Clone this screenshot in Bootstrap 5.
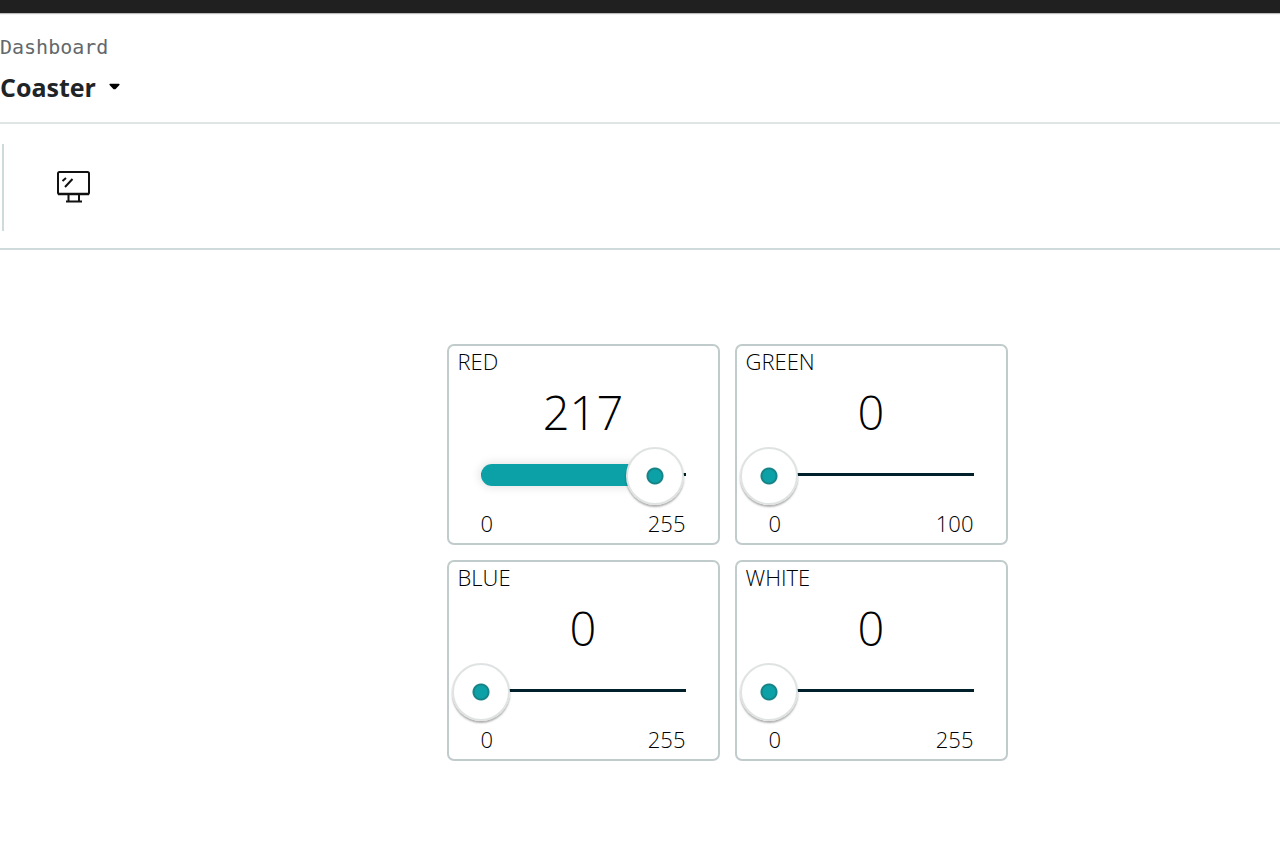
<!DOCTYPE html>
<html lang="en">
<head>
<meta charset="utf-8">
<meta name="viewport" content="width=device-width, initial-scale=1">
<title>Coaster</title>
<link href="https://cdn.jsdelivr.net/npm/bootstrap@5.3.0/dist/css/bootstrap.min.css" rel="stylesheet">
<style>
  :root { --line: #dde5e5; --edge: #c0cccb; --teal: #0ca1a6; --ink: #00202b; }
  body { font-family: "Open Sans", sans-serif; background: #fff; color: #1f2528; }
  .topbar { height: 13px; background: #202020; box-shadow: 0 1px 1px #bbb; }
  .heading { height: 111px; padding-top: 20px; border-bottom: 2px solid var(--line); }
  .crumb { font: 20px/28px "DejaVu Sans Mono", monospace; color: #63686b; }
  .title-btn { font-size: 25px; line-height: 32px; font-weight: 700; margin-top: 10px; color: #202427; }
  .toolstrip { height: 126px; border-bottom: 2px solid #cfdada; }
  .divider { width: 2px; height: 87px; margin: 20px 0 0 2px; background: #cfdada; }
  .device-btn { margin: 43px 0 0 50px; width: 38px; height: 38px; }
  .stage { padding: 94px 0 91px 174px; }
  .widgets { display: grid; grid-template-columns: repeat(2, 273px); gap: 15px; }
  .widget { height: 201px; border: 2px solid var(--edge); border-radius: 7px; padding: 0 3px; }
  .widget-name { font-size: 22px; line-height: 30px; font-weight: 300; padding-left: 6px; color: #000; }
  .widget-value { font-size: 47px; line-height: 60px; font-weight: 300; color: #000; margin-top: 6px; }
  .slider { display: grid; height: 58px; margin-top: 5px; }
  .slider > * { grid-area: 1 / 1; }
  .rail { margin: 0 29px; display: grid; align-items: center; padding-bottom: 3px; }
  .rail > * { grid-area: 1 / 1; }
  .rail-line { height: 3px; background: var(--ink); }
  .rail-fill { height: 22px; border-radius: 11px 0 0 11px; background: var(--teal); box-shadow: 0 0 9px 2px #0000001a; }
  .knob { appearance: none; width: 100%; height: 58px; margin: 0; background: none; z-index: 1; cursor: pointer; }
  .knob::-webkit-slider-thumb { appearance: none; width: 58px; height: 58px; border: 2px solid #e0e3e3; border-radius: 50%; background: radial-gradient(circle, var(--teal) 6px, #168489 7px, #168489 8px, #fff 9px); box-shadow: 0 2px 2px #00000050; }
  .knob::-moz-range-thumb { width: 54px; height: 54px; border: 2px solid #e0e3e3; border-radius: 50%; background: radial-gradient(circle, var(--teal) 6px, #168489 7px, #168489 8px, #fff 9px); box-shadow: 0 2px 2px #00000050; }
  .limits { font-size: 22px; line-height: 32px; font-weight: 300; padding: 0 29px; margin-top: 2px; color: #000; }
</style>
</head>
<body>
<div class="topbar"></div>
<header class="heading">
  <div class="crumb">Dashboard</div>
  <button type="button" class="title-btn btn p-0 border-0 d-flex align-items-center" aria-haspopup="true">Coaster
    <svg class="ms-2 ps-1" width="17" height="8" viewBox="-1 0 14 8" aria-hidden="true"><path d="M1 .5h10l.6 1L7 6.500H5L.4 1.500z" fill="#000"/></svg>
  </button>
</header>
<nav class="toolstrip d-flex align-items-start" aria-label="View">
  <div class="divider"></div>
  <button type="button" class="device-btn btn p-0 border-0 d-flex align-items-center justify-content-center" aria-label="Desktop view">
    <svg width="38" height="38" viewBox="0 0 38 38" fill="none" stroke="#111" stroke-width="2">
      <rect x="4" y="5" width="31" height="22" rx="1.500"/>
      <path d="M4 27h31" stroke-width="2.500"/>
      <path d="M14.500 28v6M25 28v6M12 34.500h16M8.500 14l3.500-3M11 20l7.500-8"/>
    </svg>
  </button>
</nav>
<main class="stage d-flex justify-content-center">
  <div class="widgets">
    <section class="widget">
      <label class="widget-name d-block" for="red">RED</label>
      <output class="widget-value d-block text-center" for="red">217</output>
      <div class="slider"><div class="rail"><div class="rail-line"></div><div class="rail-fill" style="width:85.1%"></div></div><input class="knob" id="red" type="range" min="0" max="255" value="217"></div>
      <div class="limits d-flex justify-content-between"><span>0</span><span>255</span></div>
    </section>
    <section class="widget">
      <label class="widget-name d-block" for="green">GREEN</label>
      <output class="widget-value d-block text-center" for="green">0</output>
      <div class="slider"><div class="rail"><div class="rail-line"></div></div><input class="knob" id="green" type="range" min="0" max="100" value="0"></div>
      <div class="limits d-flex justify-content-between"><span>0</span><span>100</span></div>
    </section>
    <section class="widget">
      <label class="widget-name d-block" for="blue">BLUE</label>
      <output class="widget-value d-block text-center" for="blue">0</output>
      <div class="slider"><div class="rail"><div class="rail-line"></div></div><input class="knob" id="blue" type="range" min="0" max="255" value="0"></div>
      <div class="limits d-flex justify-content-between"><span>0</span><span>255</span></div>
    </section>
    <section class="widget">
      <label class="widget-name d-block" for="white">WHITE</label>
      <output class="widget-value d-block text-center" for="white">0</output>
      <div class="slider"><div class="rail"><div class="rail-line"></div></div><input class="knob" id="white" type="range" min="0" max="255" value="0"></div>
      <div class="limits d-flex justify-content-between"><span>0</span><span>255</span></div>
    </section>
  </div>
</main>
<script src="https://cdn.jsdelivr.net/npm/bootstrap@5.3.0/dist/js/bootstrap.bundle.min.js"></script>
</body>
</html>
